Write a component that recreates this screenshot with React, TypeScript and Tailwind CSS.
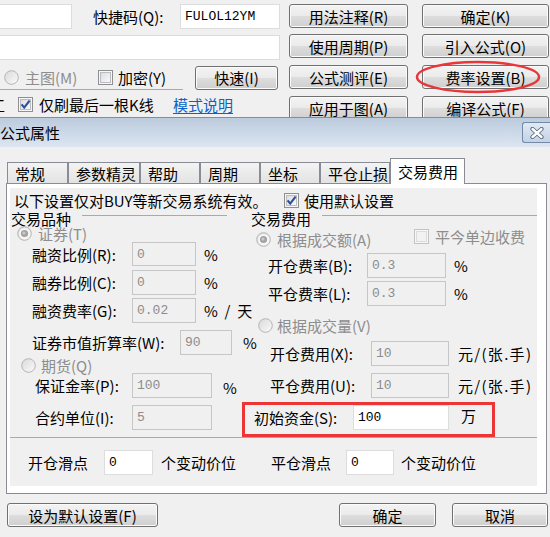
import type { ReactNode } from "react";

type Box = { children?: ReactNode; className?: string };

const Btn = ({ children, className = "" }: Box) => (
  <div
    className={`flex h-[24px] shrink-0 items-center justify-center rounded-[3px] border border-[#707070] bg-[linear-gradient(#f3f3f3_0%,#ebebeb_48%,#dddddd_52%,#cfcfcf_100%)] shadow-[inset_0_0_0_1px_#fbfbfb] ${className}`}
  >
    {children}
  </div>
);

const Field = ({ value = "", on = false, className = "" }: { value?: string; on?: boolean; className?: string }) => (
  <div
    className={`flex h-full shrink-0 items-center border pl-[4px] font-['Liberation_Mono',monospace] text-[13px] ${
      on ? "border-[#dddddd] bg-white text-black" : "border-[#c6c6c6] bg-[#f0f0f0] text-[#8c8c8c]"
    } ${className}`}
  >
    {value}
  </div>
);

const Radio = ({ on = false, className = "" }: { on?: boolean; className?: string }) => (
  <svg width="15" height="15" viewBox="0 0 15 15" className={`shrink-0 ${className}`}>
    <defs>
      <linearGradient id="rfill" x1="0" y1="0" x2="1" y2="1">
        <stop offset="0" stopColor="#d9d9d9" />
        <stop offset="1" stopColor="#fbfbfb" />
      </linearGradient>
    </defs>
    <circle cx="7.5" cy="7.5" r="6.8" fill="url(#rfill)" stroke="#b4b4b4" strokeWidth="1" />
    {on && (
      <>
        <circle cx="7.5" cy="7.5" r="5.3" fill="#f7f7f7" />
        <circle cx="7.5" cy="7.5" r="3.6" fill="#a3a3a3" />
        <circle cx="7" cy="7" r="1.6" fill="#c9c9c9" />
      </>
    )}
  </svg>
);

const Check = ({ on = false, off = false, className = "" }: { on?: boolean; off?: boolean; className?: string }) => (
  <svg width="15" height="15" viewBox="0 0 15 15" className={`shrink-0 ${className}`}>
    <defs>
      <linearGradient id="cfill" x1="0" y1="0" x2="1" y2="1">
        <stop offset="0" stopColor="#dcdcdc" />
        <stop offset="1" stopColor="#fafafa" />
      </linearGradient>
    </defs>
    <rect x="0.5" y="0.5" width="14" height="14" fill="#f7f7f7" stroke={off ? "#c3c3c3" : "#8f8f8f"} />
    <rect x="2.5" y="2.5" width="10" height="10" fill={off ? "#f2f2f2" : "url(#cfill)"} stroke={off ? "#dcdcdc" : "#b9bcc1"} />
    {on && <path d="M3.6 7.4 L6.2 10.6 L11.6 3.6" fill="none" stroke="#2f4f9e" strokeWidth="2.2" />}
  </svg>
);

const Label = ({ children, className = "" }: Box) => (
  <span className={`shrink-0 whitespace-nowrap ${className}`}>{children}</span>
);

export default function App() {
  return (
    <div className="relative h-[537px] w-[550px] overflow-hidden bg-[#f0f0f0] font-['Noto_Sans_CJK_SC',sans-serif] text-[15px] leading-none text-black">
      {/* editor window behind the dialog */}
      <div className="flex h-[117px] overflow-hidden">
        <div className="w-[289px] shrink-0">
          <div className="mt-[4px] flex h-[25px] items-center">
            <div className="h-[25px] w-[72px] shrink-0 border border-l-0 border-[#dcdcdc] bg-white" />
            <Label className="ml-[21px] w-[87px]">快捷码(Q):</Label>
            <Field on value="FULOL12YM" className="h-[25px] w-[100px]" />
          </div>
          <div className="mt-[6px] h-[25px] w-[280px] border border-l-0 border-[#dcdcdc] bg-white" />
          <div className="mt-[6px] flex h-[23px] items-center">
            <div className="flex w-[98px] shrink-0 items-center">
              <Radio className="ml-[4px]" />
              <Label className="ml-[6px] text-[#8d8d8d]">主图(M)</Label>
            </div>
            <div className="flex w-[97px] shrink-0 items-center">
              <Check />
              <Label className="ml-[5px]">加密(Y)</Label>
            </div>
            <Btn className="h-[23px] w-[83px]">快速(I)</Btn>
          </div>
          <div className="h-px w-[183px] bg-[#a9a9a9]" />
          <div className="mt-[7px] flex h-[15px] items-center">
            <Label className="-ml-[10px] w-[28px]">工</Label>
            <Check on />
            <Label className="ml-[6px] w-[134px]">仅刷最后一根K线</Label>
            <Label className="text-[#0b63c8] underline underline-offset-2">模式说明</Label>
          </div>
        </div>
        <div className="flex w-[119px] shrink-0 flex-col pt-[4px]">
          <Btn>用法注释(R)</Btn>
          <Btn className="mt-[6px]">使用周期(P)</Btn>
          <Btn className="mt-[7px]">公式测评(E)</Btn>
          <Btn className="mt-[7px]">应用于图(A)</Btn>
        </div>
        <div className="ml-[14px] flex w-[127px] shrink-0 flex-col pt-[4px]">
          <Btn>确定(K)</Btn>
          <Btn className="mt-[6px]">引入公式(O)</Btn>
          <Btn className="mt-[7px]">费率设置(B)</Btn>
          <Btn className="mt-[7px]">编译公式(F)</Btn>
        </div>
      </div>

      {/* red mark round the fee button */}
      <svg className="absolute left-[414px] top-[60px]" width="128" height="34" viewBox="0 0 128 34">
        <ellipse cx="64" cy="17" rx="61" ry="15" fill="none" stroke="#e8363a" strokeWidth="2.5" />
      </svg>

      {/* dialog */}
      <div className="border-t border-[#7f8ea3]">
        <div className="flex h-[29px] items-center bg-linear-to-b from-[#bccbdd] to-[#dce6f2]">
          <span>公式属性</span>
          <div className="ml-auto mt-[4px] flex h-[21px] w-[28px] items-center justify-center self-start rounded-l-[3px] border border-r-0 border-[#7489a6] bg-linear-to-b from-[#e1eaf4] to-[#c3d2e5]">
            <svg width="14" height="12" viewBox="0 0 14 12">
              <path d="M2.5 2 L11.5 10 M11.5 2 L2.5 10" stroke="#56677f" strokeWidth="4.2" strokeLinecap="round" />
              <path d="M2.5 2 L11.5 10 M11.5 2 L2.5 10" stroke="#ffffff" strokeWidth="2.4" strokeLinecap="round" />
            </svg>
          </div>
        </div>

        <div className="mt-[11px] flex h-[25px] items-end pl-[7px]">
          {[
            ["常规", "w-[61px]"],
            ["参数精灵", "w-[72px]"],
            ["帮助", "w-[60px]"],
            ["周期", "w-[60px]"],
            ["坐标", "w-[60px]"],
            ["平仓止损", "w-[70px]"],
          ].map(([t, w]) => (
            <div
              key={t}
              className={`flex h-[21px] shrink-0 items-center border border-b-0 border-[#898c95] bg-linear-to-b from-[#f3f3f3] to-[#e3e3e3] pl-[7px] ${w}`}
            >
              {t}
            </div>
          ))}
          <div className="relative z-10 -mb-px flex h-[26px] w-[75px] shrink-0 items-center border border-b-0 border-[#898c95] bg-white pl-[7px]">
            交易费用
          </div>
        </div>

        <div className="ml-[6px] h-[311px] w-[541px] border border-[#898c95] bg-white pb-[9px] pl-[3px] pr-[9px] pt-[2px]">
          <div className="h-full w-full bg-[#f0f0f0]">
            <div className="mt-[2px] flex h-[24px] items-center pl-[4px]">
              <Label className="w-[270px]">以下设置仅对BUY等新交易系统有效。</Label>
              <Check on />
              <Label className="ml-[5px]">使用默认设置</Label>
            </div>

            <div className="flex h-[225px]">
              {/* 交易品种 */}
              <div className="w-[232px] shrink-0">
                <div className="flex h-[13px] items-center">
                  <Label className="ml-[1px] leading-[13px]">交易品种</Label>
                  <div className="ml-[11px] mt-[3px] h-px w-[145px] self-start bg-[#a9a9a9]" />
                </div>
                <div className="flex h-[16px] items-end pl-[7px]">
                  <Radio on />
                  <Label className="ml-[6px] leading-[14px] text-[#8d8d8d]">证券(T)</Label>
                </div>
                <div className="mt-[1px] flex h-[24px] items-center pl-[22px]">
                  <Label className="w-[100px]">融资比例(R):</Label>
                  <Field value="0" className="w-[64px]" />
                  <Label className="ml-[8px]">%</Label>
                </div>
                <div className="mt-[4px] flex h-[25px] items-center pl-[22px]">
                  <Label className="w-[100px]">融券比例(C):</Label>
                  <Field value="0" className="w-[64px]" />
                  <Label className="ml-[8px]">%</Label>
                </div>
                <div className="mt-[3px] flex h-[25px] items-center pl-[22px]">
                  <Label className="w-[100px]">融资费率(G):</Label>
                  <Field value="0.02" className="w-[64px]" />
                  <Label className="ml-[8px] whitespace-pre">%  /  天</Label>
                </div>
                <div className="mt-[7px] flex h-[25px] items-center pl-[22px]">
                  <Label className="w-[148px]">证券市值折算率(W):</Label>
                  <Field value="90" className="w-[52px]" />
                  <Label className="ml-[11px]">%</Label>
                </div>
                <div className="mt-[3px] flex h-[15px] items-center pl-[11px]">
                  <Radio />
                  <Label className="ml-[5px] text-[#8d8d8d]">期货(Q)</Label>
                </div>
                <div className="flex h-[25px] items-center pl-[25px]">
                  <Label className="w-[97px]">保证金率(P):</Label>
                  <Field value="100" className="w-[80px]" />
                  <Label className="ml-[11px] mt-[3px]">%</Label>
                </div>
                <div className="mt-[7px] flex h-[25px] items-center pl-[25px]">
                  <Label className="w-[97px]">合约单位(I):</Label>
                  <Field value="5" className="w-[80px]" />
                </div>
              </div>

              {/* 交易费用 */}
              <div className="w-[295px] shrink-0">
                <div className="flex h-[13px] items-center">
                  <Label className="ml-[9px] leading-[13px]">交易费用</Label>
                  <div className="ml-[11px] mt-[3px] h-px flex-1 self-start bg-[#a9a9a9]" />
                </div>
                <div className="mt-[6px] flex h-[16px] items-center pl-[14px]">
                  <Radio on />
                  <Label className="ml-[6px] w-[137px] text-[#8d8d8d]">根据成交额(A)</Label>
                  <Check off className="-mt-[5px]" />
                  <Label className="ml-[6px] -mt-[5px] text-[#8d8d8d]">平今单边收费</Label>
                </div>
                <div className="mt-[6px] flex h-[25px] items-center pl-[26px]">
                  <Label className="w-[99px]">开仓费率(B):</Label>
                  <Field value="0.3" className="w-[79px]" />
                  <Label className="ml-[8px]">%</Label>
                </div>
                <div className="mt-[3px] flex h-[25px] items-center pl-[26px]">
                  <Label className="w-[99px]">平仓费率(L):</Label>
                  <Field value="0.3" className="w-[79px]" />
                  <Label className="ml-[8px]">%</Label>
                </div>
                <div className="mt-[11px] flex h-[16px] items-center pl-[16px]">
                  <Radio />
                  <Label className="ml-[4px] text-[#8d8d8d]">根据成交量(V)</Label>
                </div>
                <div className="mt-[8px] flex h-[25px] items-center pl-[28px]">
                  <Label className="w-[101px]">开仓费用(X):</Label>
                  <Field value="10" className="w-[78px]" />
                  <Label className="ml-[9px] tracking-[1.3px]">元/(张.手)</Label>
                </div>
                <div className="mt-[7px] flex h-[25px] items-center pl-[28px]">
                  <Label className="w-[101px]">平仓费用(U):</Label>
                  <Field value="10" className="w-[78px]" />
                  <Label className="ml-[9px] tracking-[1.3px]">元/(张.手)</Label>
                </div>
                <div className="mt-[4px] h-[35px] w-[253px] border-[3px] border-[#ee3535] pl-[9px]">
                  <div className="flex h-[25px] items-center">
                    <Label className="w-[99px]">初始资金(S):</Label>
                    <Field on value="100" className="w-[96px]" />
                    <Label className="ml-[12px] -mt-[5px]">万</Label>
                  </div>
                </div>
              </div>
            </div>

            <div className="h-px w-full bg-[#a9a9a9]" />

            <div className="mt-[12px] flex h-[25px] items-center pl-[18px]">
              <Label className="w-[76px]">开仓滑点</Label>
              <Field on value="0" className="w-[49px]" />
              <Label className="ml-[8px] w-[110px]">个变动价位</Label>
              <Label className="w-[75px]">平仓滑点</Label>
              <Field on value="0" className="w-[48px]" />
              <Label className="ml-[7px]">个变动价位</Label>
            </div>
          </div>
        </div>

        <div className="mt-[9px] flex h-[24px]">
          <Btn className="ml-[7px] w-[151px]">设为默认设置(F)</Btn>
          <Btn className="ml-[181px] w-[97px]">确定</Btn>
          <Btn className="ml-[16px] w-[96px]">取消</Btn>
        </div>
      </div>
    </div>
  );
}
